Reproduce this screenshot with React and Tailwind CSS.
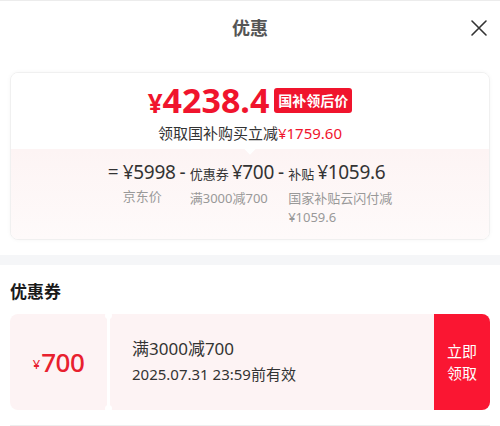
import React from 'react';

const font = { fontFamily: '"Noto Sans", "Noto Sans CJK SC", sans-serif' };

const CloseIcon = () => (
  <svg width="18" height="18" viewBox="0 0 18 18" fill="none" stroke="#333" strokeWidth="1.6" strokeLinecap="round">
    <path d="M2 2 L16 16 M16 2 L2 16" />
  </svg>
);

const Part = ({ op, label, amount, note }) => (
  <div className="flex items-start">
    <span className="text-[19px] leading-[26px] mx-[4px]">{op}</span>
    <div className="flex flex-col">
      <div className="flex items-baseline text-[19px] leading-[26px] tracking-[-0.3px]">
        {label && <span className="text-[13px] mr-[3px] tracking-normal">{label}</span>}
        <span>{amount}</span>
      </div>
      <div className="text-[13px] text-[#999] leading-[19px] mt-[2px]">{note}</div>
    </div>
  </div>
);

export default function App() {
  return (
    <div className="w-[500px] h-[426px] bg-white overflow-hidden border-t border-[#ececec]" style={font}>
      <div className="relative h-[54px] flex items-center justify-center">
        <h1 className="text-[18px] font-bold text-[#555]">优惠</h1>
        <button className="absolute right-[12px] top-[18px]">
          <CloseIcon />
        </button>
      </div>

      <div className="px-[10px] pt-[17px] pb-[15px]">
        <div className="rounded-[8px] border border-[#f0f0f0] shadow-[0_0_4px_rgba(0,0,0,0.04)] overflow-hidden">
          <div className="bg-white pt-[10px] pb-[6px] flex flex-col items-center">
            <div className="flex items-center gap-[5px]">
              <span className="text-[#f0142d] font-bold leading-none">
                <span className="text-[26px]">¥</span>
                <span className="text-[34px]">4238.4</span>
              </span>
              <span className="bg-[#f0142d] text-white text-[14px] font-bold rounded-[3px] px-[4px] h-[25px] flex items-center">国补领后价</span>
            </div>
            <div className="text-[15px] text-[#333] mt-[6px] leading-[20px]">
              领取国补购买立减<span className="text-[#f0142d]">¥1759.60</span>
            </div>
          </div>
          <div className="relative bg-gradient-to-b from-[#fdf4f4] to-[#fefafa] h-[90px] pt-[10px]">
            <div className="absolute left-1/2 -top-[4px] w-[8px] h-[8px] bg-white rotate-45 -translate-x-1/2" />
            <div className="flex justify-center text-[#333] pr-[4px]">
              <Part op="=" amount="¥5998" note="京东价" />
              <Part op="-" label="优惠券" amount="¥700" note="满3000减700" />
              <Part op="-" label="补贴" amount="¥1059.6" note={<>国家补贴云闪付减<br />¥1059.6</>} />
            </div>
          </div>
        </div>
      </div>

      <div className="h-[10px] bg-[#f5f6f8]" />

      <div className="px-[10px] pt-[15px]">
        <h2 className="text-[17px] font-bold text-[#1a1a1a] leading-[24px]">优惠券</h2>
        <div className="mt-[10px] flex h-[96px]">
          <div className="relative w-[97px] bg-[#fdf3f4] rounded-l-[8px] flex items-center justify-center text-[#e8202e]">
            <span className="text-[13px] mt-[6px] mr-[1px]">¥</span>
            <span className="text-[26px] font-medium tracking-[-0.5px]">700</span>
          </div>
          <div className="relative w-[3px] bg-white">
            <div className="absolute -top-[2px] left-[-2px] w-[7px] h-[7px] rounded-full bg-white" />
            <div className="absolute -bottom-[2px] left-[-2px] w-[7px] h-[7px] rounded-full bg-white" />
          </div>
          <div className="flex-1 bg-[#fdf3f4] flex flex-col justify-center pl-[22px] pb-[2px] text-[#333]">
            <div className="text-[17px] leading-[24px]">满3000减700</div>
            <div className="text-[15px] leading-[22px] mt-[2px]">2025.07.31 23:59前有效</div>
          </div>
          <button className="w-[56px] bg-[#fa1632] rounded-r-[8px] text-white text-[15px] leading-[22px] flex items-center justify-center">
            立即<br />领取
          </button>
        </div>
        <div className="mt-[15px] border-t border-[#eee]" />
      </div>
    </div>
  );
}
